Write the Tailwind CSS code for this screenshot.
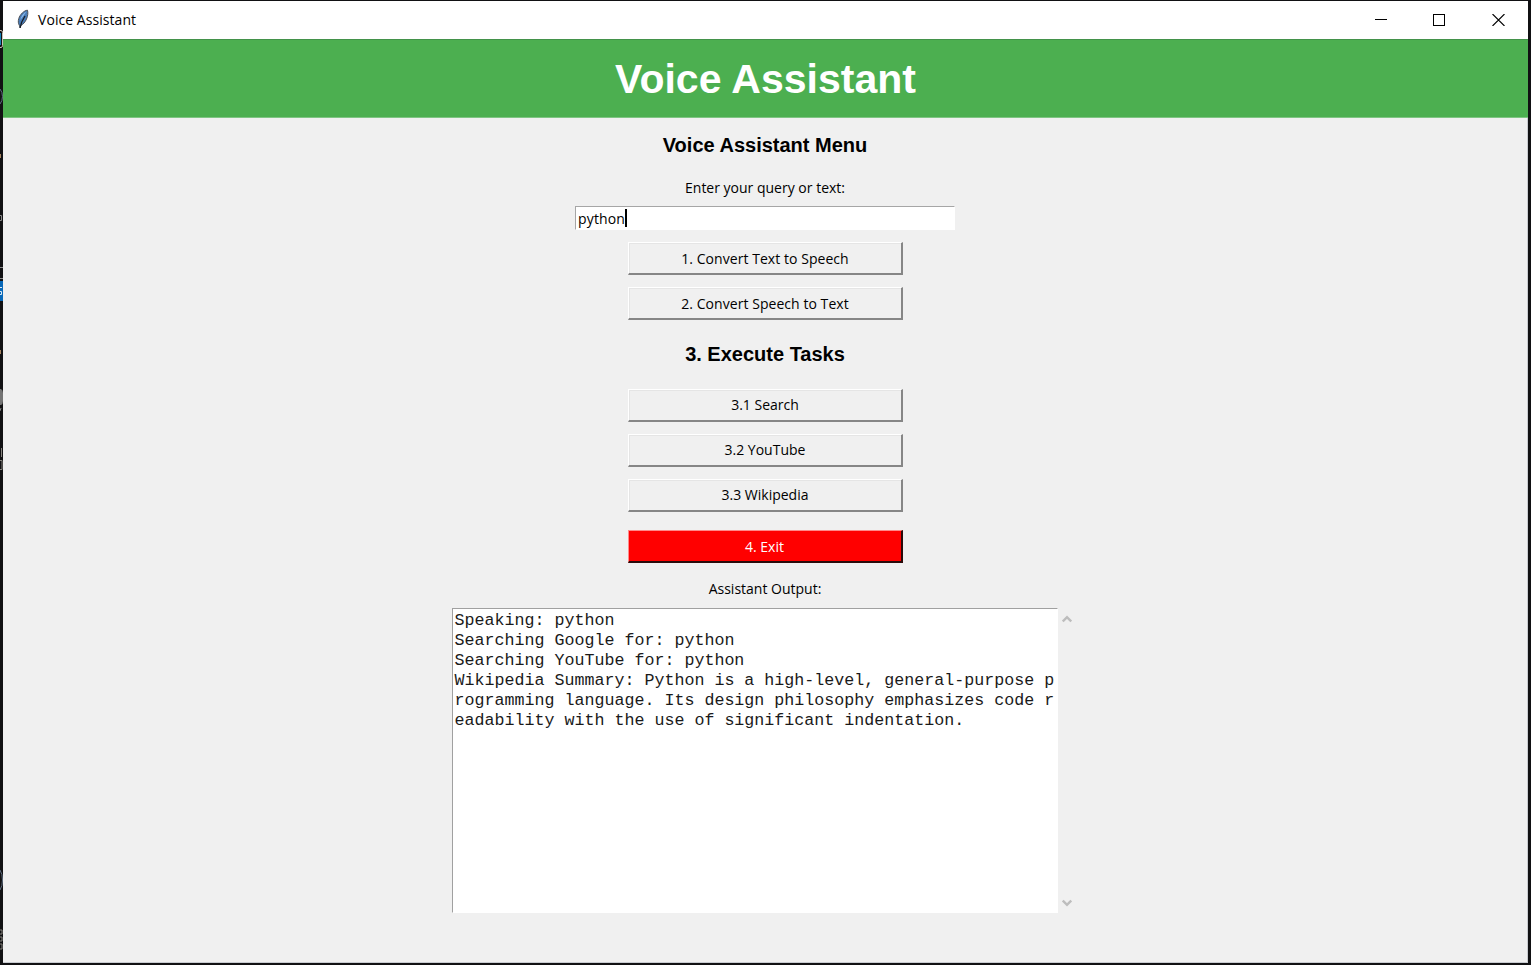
<!DOCTYPE html>
<html lang="en">
<head>
<meta charset="utf-8">
<title>Voice Assistant</title>
<script src="https://cdn.jsdelivr.net/npm/@tailwindcss/browser@4"></script>
</head>
<body class="relative h-[965px] w-[1531px] overflow-hidden bg-[#111113] pt-px pl-[3px] font-['Open_Sans','Noto_Sans',sans-serif] text-[14px] text-black">
<!-- slivers of the editor behind the window -->
<svg class="absolute left-0 top-0" width="3" height="965" fill="none">
  <path d="M0 30.500h1q1.500 0 1.500 2v13q0 2-1.500 2H0" stroke="#c8c0b4"/><path d="M0 33h1v12H0z" fill="#1683b8"/>
  <path d="M0 89q2.500 3 2.500 7.500T0 104M0 870q2.500 4 2.500 10T0 890" stroke="#617084"/>
  <path d="M0 154h1v4H0zM0 350h1v4H0z" fill="#a58360"/>
  <path d="M0 215.500h1.500v5H0M0 267.500h3M0 278.500h3" stroke="#888"/>
  <path d="M0 281h3v20H0z" fill="#0868b8"/><path d="M0 287.500h2M0 291.500h1.500v3H0" stroke="#d8e8f5"/>
  <path d="M0 389h1q2 1 2 4v8q0 3-2 4H0z" fill="#747474"/><path d="M0 411l1-3" stroke="#888"/>
  <path d="M1.500 448v9M0 460.500h2v9H0M0 930h2v4H0M0 937h2v4H0M0 944h2v5H0" stroke="#85827d"/>
</svg>
<div class="flex h-[962px] w-[1525px] flex-col bg-[#f0f0f0]">
  <header class="flex h-[38px] items-center bg-white">
    <svg class="ml-[13px] mt-[-2px]" width="14" height="20" viewBox="0 0 14 20">
      <path d="M11.500 1.200C8 1.500 4 5.500 2.800 9.500c-.8 2.600-.6 5 .5 6.700l.9 2.600.6-2.300c2.200-1 4.300-3.200 5.700-6.500C11.800 7 12.200 4 11.500 1.200z" fill="#4a7db8" stroke="#4b5058" stroke-width="1"/>
      <path d="M10.500 2.500C7.500 4 5 7.500 4.200 11l2-2.500z" fill="#8fbcec"/>
      <path d="M9 7C7 10 5 13 4 19" fill="none" stroke="#161c26" stroke-width="1.300"/>
    </svg>
    <h1 class="ml-2 whitespace-nowrap text-[14px] leading-5 tracking-[0.060px]">Voice Assistant</h1>
    <div class="ml-auto mr-[23px] flex items-center">
      <svg class="mr-[46px]" width="12" height="12" shape-rendering="crispEdges"><path d="M0 5.500h12" stroke="#000"/></svg>
      <svg class="mr-[47px]" width="12" height="12" shape-rendering="crispEdges"><path d="M.5.5h11v11H.5z" fill="none" stroke="#000"/></svg>
      <svg width="13" height="12"><path d="M.5 0l12 12M12.500 0L.5 12" stroke="#000" stroke-width="1.100"/></svg>
    </div>
  </header>
  <div class="flex h-[79px] items-center justify-center border-t border-b border-t-[#43924a] border-b-[#7fc583] bg-[#4caf50] pt-[2px] font-['Liberation_Sans',sans-serif] text-[41px] font-bold text-white">
    <h2 class="whitespace-nowrap">Voice Assistant</h2>
  </div>
  <main class="flex flex-1 flex-col items-center whitespace-nowrap border-r border-b border-[#c8cbd0]">
    <h3 class="mt-[14px] h-[28px] font-['Liberation_Sans',sans-serif] text-[20px] leading-[27px] font-bold">Voice Assistant Menu</h3>
    <label class="mt-[18px] h-5 leading-5">Enter your query or text:</label>
    <div class="mt-2 flex h-[24px] w-[380px] items-center border border-t-[#a6a6a6] border-l-[#a6a6a6] border-r-white border-b-white bg-white pl-[2px]">
      <span class="tracking-[0.150px]">python</span><i class="h-[18px] w-[2px] bg-black"></i>
    </div>
    <div class="mt-3 flex flex-col gap-3">
      <button class="h-[33px] w-[275px] border-t border-l border-r-2 border-b-2 border-t-white border-l-white border-r-[#868686] border-b-[#868686] pl-px tracking-[0.050px] shadow-[inset_1px_1px_#e5e5e5]">1. Convert Text to Speech</button>
      <button class="h-[33px] w-[275px] border-t border-l border-r-2 border-b-2 border-t-white border-l-white border-r-[#868686] border-b-[#868686] pl-px tracking-[0.050px] shadow-[inset_1px_1px_#e5e5e5]">2. Convert Speech to Text</button>
    </div>
    <h3 class="mt-[20px] h-[28px] font-['Liberation_Sans',sans-serif] text-[20px] leading-[28px] font-bold">3. Execute Tasks</h3>
    <div class="mt-[21px] flex flex-col gap-3">
      <button class="h-[33px] w-[275px] border-t border-l border-r-2 border-b-2 border-t-white border-l-white border-r-[#868686] border-b-[#868686] pb-[2px] pl-px shadow-[inset_1px_1px_#e5e5e5]">3.1 Search</button>
      <button class="h-[33px] w-[275px] border-t border-l border-r-2 border-b-2 border-t-white border-l-white border-r-[#868686] border-b-[#868686] pb-[2px] pl-px shadow-[inset_1px_1px_#e5e5e5]">3.2 YouTube</button>
      <button class="h-[33px] w-[275px] border-t border-l border-r-2 border-b-2 border-t-white border-l-white border-r-[#868686] border-b-[#868686] pb-[2px] pl-px shadow-[inset_1px_1px_#e5e5e5]">3.3 Wikipedia</button>
    </div>
    <button class="mt-[18px] h-[33px] w-[275px] border-t border-l border-r-2 border-b-2 border-t-[#ff8a8a] border-l-[#ff8a8a] border-r-[#2a0b0b] border-b-[#2a0b0b] bg-[#ff0000] text-white">4. Exit</button>
    <label class="mt-4 h-5 leading-5">Assistant Output:</label>
    <div class="mt-[9px] flex w-[627px]">
      <pre class="h-[305px] w-[606px] border border-t-[#a0a0a0] border-l-[#a0a0a0] border-r-white border-b-white bg-white pt-[2px] pl-[2px] font-['Liberation_Mono',monospace] text-[16.670px] leading-5 text-[#1a1a1a]">Speaking: python
Searching Google for: python
Searching YouTube for: python
Wikipedia Summary: Python is a high-level, general-purpose p
rogramming language. Its design philosophy emphasizes code r
eadability with the use of significant indentation.</pre>
      <div class="flex flex-1 flex-col items-center justify-between pt-[7px] pr-[3px] pb-[6px]">
        <svg width="10" height="8" fill="none" stroke="#bdbdbd" stroke-width="2.400"><path d="M.8 6.500L5 2.200l4.200 4.300"/></svg>
        <svg width="10" height="8" fill="none" stroke="#bdbdbd" stroke-width="2.400"><path d="M.8 1.500L5 5.800l4.200-4.300"/></svg>
      </div>
    </div>
  </main>
</div>
</body>
</html>
